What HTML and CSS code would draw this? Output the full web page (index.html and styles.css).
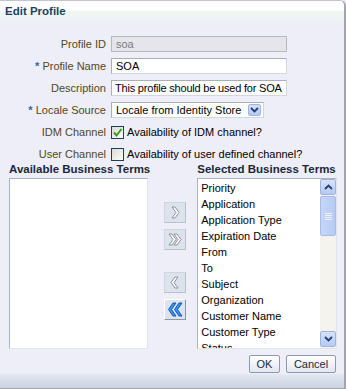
FILE: index.html
```html
<html>
  <head>
    <link rel="stylesheet" href="styles.css">
  </head>
  <body>
    <div class="dialog">
      <div class="titleBar">Edit Profile</div>
      <div class="form">
        <div class="lbl">Profile ID</div>
        <div class="field readOnly">soa</div>

        <div class="lbl"><span class="req">*</span> Profile Name</div>
        <div class="field">SOA</div>

        <div class="lbl">Description</div>
        <div class="field tight">This profile should be used for SOA</div>

        <div class="lbl"><span class="req">*</span> Locale Source</div>
        <div class="field choice">
          <span>Locale from Identity Store</span>
          <span class="dropBtn">
            <svg width="9" height="6" viewBox="0 0 9 6"><polyline points="1,1 4.5,4.5 8,1" fill="none" stroke="#24406e" stroke-width="1.8"/></svg>
          </span>
        </div>

        <div class="lbl">IDM Channel</div>
        <div class="check">
          <span class="box">
            <svg width="11" height="11" viewBox="0 0 11 11"><polyline points="2,5.5 4.5,8.5 9.5,2" fill="none" stroke="#3a9a24" stroke-width="2"/></svg>
          </span>
          Availability of IDM channel?
        </div>

        <div class="lbl">User Channel</div>
        <div class="check">
          <span class="box"></span>
          Availability of user defined channel?
        </div>
      </div>

      <div class="shuttle">
        <div class="col leftCol">
          <div class="colHead">Available Business Terms</div>
          <div class="listBox"></div>
        </div>

        <div class="moveBtns">
          <div class="moveBtn">
            <svg width="22" height="21" viewBox="0 0 22 21"><polygon points="8,5 11,5 15,10.5 11,16 8,16 12,10.5" fill="#fff" stroke="#8e9299"/></svg>
          </div>
          <div class="moveBtn">
            <svg width="22" height="21" viewBox="0 0 22 21"><polygon points="5,5 8,5 12,10.5 8,16 5,16 9,10.5" fill="#fff" stroke="#8e9299"/><polygon points="10,5 13,5 17,10.5 13,16 10,16 14,10.5" fill="#fff" stroke="#8e9299"/></svg>
          </div>
          <div class="moveBtn gap">
            <svg width="22" height="21" viewBox="0 0 22 21"><polygon points="14,5 11,5 7,10.5 11,16 14,16 10,10.5" fill="#fff" stroke="#8e9299"/></svg>
          </div>
          <div class="moveBtn active">
            <svg width="22" height="21" viewBox="0 0 22 21"><polygon points="12,4 9,4 4.5,10.5 9,17 12,17 7.5,10.5" fill="#3a93ea" stroke="#1557b8"/><polygon points="18,4 15,4 10.5,10.5 15,17 18,17 13.5,10.5" fill="#3a93ea" stroke="#1557b8"/></svg>
          </div>
        </div>

        <div class="col rightCol">
          <div class="colHead">Selected Business Terms</div>
          <div class="listBox withScroll">
            <ul class="items">
              <li>Priority</li>
              <li>Application</li>
              <li>Application Type</li>
              <li>Expiration Date</li>
              <li>From</li>
              <li>To</li>
              <li>Subject</li>
              <li>Organization</li>
              <li>Customer Name</li>
              <li>Customer Type</li>
              <li>Status</li>
            </ul>
            <div class="scrollBar">
              <div class="scrollArrow">
                <svg width="9" height="6" viewBox="0 0 9 6"><polyline points="1,5 4.5,1.5 8,5" fill="none" stroke="#24406e" stroke-width="1.8"/></svg>
              </div>
              <div class="thumb"><span></span><span></span><span></span><span></span></div>
              <div class="track"></div>
              <div class="scrollArrow">
                <svg width="9" height="6" viewBox="0 0 9 6"><polyline points="1,1 4.5,4.5 8,1" fill="none" stroke="#24406e" stroke-width="1.8"/></svg>
              </div>
            </div>
          </div>
        </div>
      </div>

      <div class="actions">
        <div class="btn okBtn">OK</div>
        <div class="btn">Cancel</div>
      </div>
      <div class="footer"></div>
    </div>
  </body>
</html>
```

FILE: styles.css
```css
body {
  margin: 0;
  background-color: #edeef7;
  font-family: "Liberation Sans", Arial, sans-serif;
  font-size: 11px;
  color: #000;
}

.dialog {
  width: 344px;
  height: 388px;
  display: flex;
  flex-direction: column;
  background-color: #edeef7;
  border-top: solid 1px #c4c5cc;
  border-right: solid 2px #a3a4ad;
  border-top-right-radius: 6px;
  overflow: hidden;
}

.titleBar {
  height: 20px;
  padding-left: 5px;
  line-height: 20px;
  font-size: 11.5px;
  font-weight: bold;
  color: #1d4163;
  background: linear-gradient(#ffffff 0, #fdfefe 45%, #f0f6f4 55%, #edf3f3 100%);
}

/* form rows */
.form {
  display: grid;
  grid-template-columns: 106px 176px;
  grid-auto-rows: 16px;
  column-gap: 5px;
  row-gap: 6px;
  margin-top: 15px;
}

.lbl {
  text-align: right;
  line-height: 16px;
  color: #54461c;
  white-space: nowrap;
}

.req {
  color: #2a67b0;
  font-weight: bold;
}

.field {
  box-sizing: border-box;
  height: 16px;
  padding-left: 4px;
  line-height: 14px;
  background-color: #fff;
  border: solid 1px #d3d6dd;
  border-top-color: #a9aeb7;
  border-left-color: #a9aeb7;
  white-space: nowrap;
  overflow: hidden;
}

.tight {
  padding-left: 3px;
  letter-spacing: -0.2px;
}

.readOnly {
  background-color: #e5e5eb;
  color: #7a7a80;
  border-color: #b7b8bd;
}

.choice {
  width: 153px;
  display: flex;
  align-items: center;
  justify-content: space-between;
  padding-right: 2px;
}

.dropBtn {
  width: 13px;
  height: 12px;
  display: flex;
  align-items: center;
  justify-content: center;
  background: linear-gradient(#d3e0fa, #b4c8f3);
  border: solid 1px #9fb5e4;
  border-radius: 2px;
  box-sizing: border-box;
}

.check {
  display: flex;
  align-items: center;
  gap: 3px;
  white-space: nowrap;
  line-height: 16px;
}

.box {
  box-sizing: border-box;
  flex: none;
  width: 13px;
  height: 13px;
  display: flex;
  align-items: center;
  justify-content: center;
  border: solid 1px #223c61;
  background: linear-gradient(135deg, #dcdcd6, #fbfbf8);
}

/* shuttle */
.shuttle {
  display: flex;
  padding-left: 9px;
}

.colHead {
  margin: 0 0 2px;
  line-height: 14px;
  font-size: 11.5px;
  font-weight: bold;
  color: #1b2738;
  white-space: nowrap;
}

.listBox {
  box-sizing: border-box;
  height: 171px;
  background-color: #fff;
  border: solid 1px #e2e4ea;
  border-top-color: #aeb2bb;
  border-left-color: #aeb2bb;
}

.leftCol .listBox {
  width: 139px;
}

.rightCol .listBox {
  width: 140px;
}

.moveBtns {
  display: flex;
  flex-direction: column;
  gap: 6px;
  padding-top: 40px;
  margin: 0 11px 0 14px;
}

.moveBtn {
  box-sizing: border-box;
  width: 22px;
  height: 21px;
  background-color: #dde3ec;
  border: solid 1px #cfd5df;
  border-right-color: #b9c1cd;
  border-bottom-color: #b9c1cd;
}

.moveBtn svg {
  display: block;
  margin: -1px;
}

.moveBtn.gap {
  margin-top: 16px;
}

.moveBtn.active {
  border-color: #fff;
  border-right-color: #8b97a8;
  border-bottom-color: #8b97a8;
}

.withScroll {
  display: flex;
  overflow: hidden;
}

.items {
  flex: 1;
  margin: 0;
  padding: 1px 0 0 3px;
  list-style: none;
}

.items li {
  line-height: 16px;
  height: 16px;
  white-space: nowrap;
}

.scrollBar {
  width: 16px;
  display: flex;
  flex-direction: column;
  background-color: #f4f3ee;
  padding-bottom: 1px;
}

.scrollArrow {
  box-sizing: border-box;
  height: 16px;
  display: flex;
  align-items: center;
  justify-content: center;
  background: linear-gradient(#d6e2fb, #b5c9f4);
  border: solid 1px #9db3e5;
  border-radius: 2px;
}

.thumb {
  box-sizing: border-box;
  height: 40px;
  margin-top: 1px;
  display: flex;
  flex-direction: column;
  align-items: center;
  justify-content: center;
  gap: 1px;
  background: linear-gradient(90deg, #c6d6f9, #b7cbf5);
  border: solid 1px #a6bbe8;
  border-radius: 2px;
}

.thumb span {
  width: 7px;
  height: 1px;
  background-color: #eef3fe;
}

.track {
  flex: 1;
}

/* buttons */
.actions {
  display: flex;
  justify-content: flex-end;
  gap: 6px;
  margin-top: 6px;
  padding-right: 8px;
}

.btn {
  box-sizing: border-box;
  height: 18px;
  width: 50px;
  line-height: 16px;
  text-align: center;
  color: #1b2a3d;
  background: linear-gradient(#ffffff, #f1f3f7 50%, #e2e6ee);
  border: solid 1px #8e9aab;
  border-radius: 2px;
}

.okBtn {
  width: 31px;
}

.footer {
  margin-top: auto;
  height: 14px;
  background: linear-gradient(#e4e8f2, #ccd2e2);
  border-bottom: solid 1px #a2a6b0;
}
```
